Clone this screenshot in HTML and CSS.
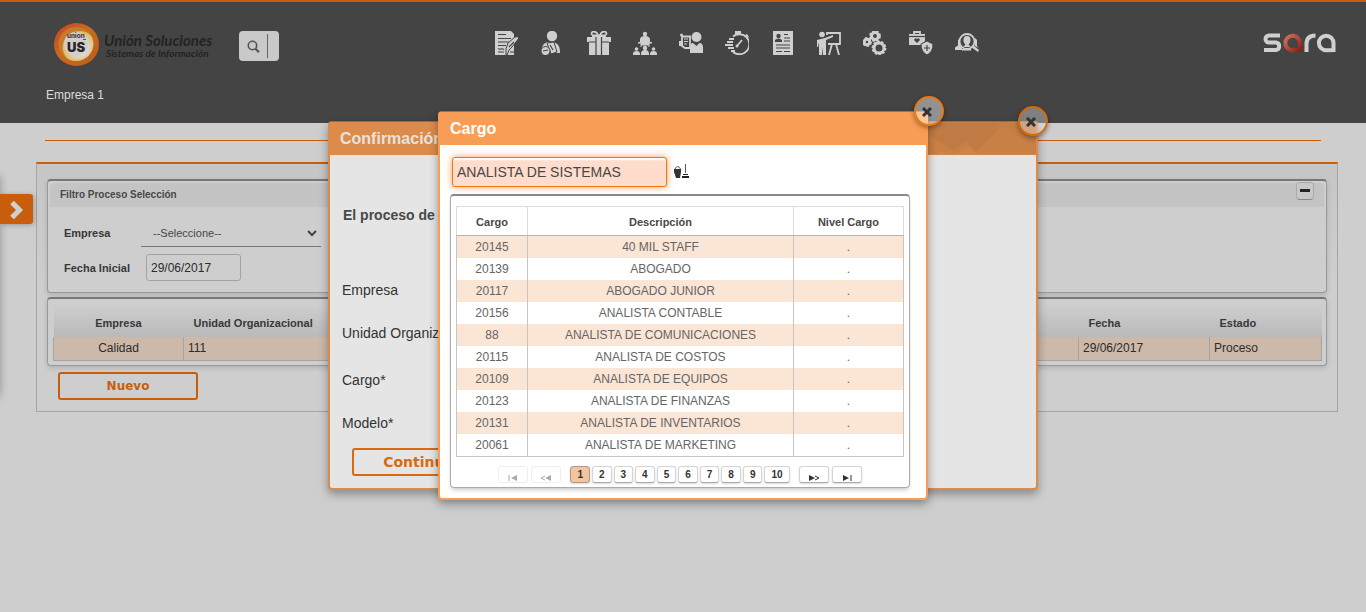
FILE: index.html
```html
<!DOCTYPE html>
<html lang="es">
<head>
<meta charset="utf-8">
<meta name="viewport" content="width=device-width, initial-scale=1">
<title>Proceso Selección</title>
<link rel="stylesheet" href="styles.css">
</head>
<body>
<header class="top">
  <div class="top-row">
    <svg class="logo" width="162" height="44" viewBox="0 0 162 44" role="img" aria-label="Unión Soluciones">
      <defs>
        <radialGradient id="disc" cx=".6" cy=".6"><stop offset=".5" stop-color="#ded8cc"/><stop offset=".75" stop-color="#d9c98d"/><stop offset=".92" stop-color="#dfbd61"/><stop offset="1" stop-color="#c8792e"/></radialGradient>
        <linearGradient id="rim" x1="0" y1="0" x2="1" y2="1"><stop offset="0" stop-color="#c4441b"/><stop offset=".45" stop-color="#c76b20"/><stop offset="1" stop-color="#bd5c18"/></linearGradient>
      </defs>
      <ellipse cx="22.500" cy="22.500" rx="22.500" ry="21.500" fill="url(#rim)"/>
      <ellipse cx="22" cy="22" rx="17.500" ry="17" fill="url(#disc)"/>
      <circle cx="22" cy="22" r="12" fill="#d2cfca"/>
      <text class="logo-mini" x="13" y="16">union</text>
      <text class="logo-us" x="13" y="30">US</text>
      <path d="M29 17.500h3" stroke="#b22" stroke-width="1"/>
      <text class="logo-name" x="50" y="24">Unión Soluciones</text>
      <text class="logo-sub" x="52" y="35">Sistemas de Información</text>
    </svg>
    <form class="search">
      <button class="search-go" type="button" aria-label="Buscar"><svg width="14" height="14" viewBox="0 0 14 14" fill="none" stroke="#555"><circle cx="5.500" cy="5.500" r="4.200" stroke-width="1.600"/><path d="M8.500 8.800l3.500 3.500" stroke-width="2.200"/></svg></button>
      <input class="search-text" type="text" aria-label="Texto a buscar">
    </form>
    <nav class="modules" aria-label="Módulos">
      <a href="#" aria-label="Contratos"><svg viewBox="0 0 24 24"><path d="M0 0h16l3 3v21H0z"/><g class="cut"><path d="M3 3.500h8M3 7.500h13M3 11h11M3 14.500h8M3 18c1-1 2 1 3 0s2 1 3 0M3 21h6"/></g><path class="edge" d="M11 18l2-6 7-6q3-1 4 1l-7 9-3 3-2 5h-1z"/><path class="cut" d="M14 16l5-5M15 21h4"/></svg></a>
      <a href="#" aria-label="Pagos"><svg viewBox="0 0 24 24"><circle cx="11" cy="5" r="5.200"/><path d="M1 17c1-5 4-6 9-6 7 0 9 4 9 11h-8z"/><path class="edge" d="M6 12l7-1 3 10-6 2z"/><circle class="edge" cx="4.500" cy="20" r="4.500"/><path class="cut" d="M9 14l3 5M2 20l5-1"/></svg></a>
      <a href="#" aria-label="Beneficios"><svg viewBox="0 0 24 24"><path class="line" d="M11 4C9-1 3 0 5 4M13 4C15-1 21 0 19 4"/><path d="M5 3.500h14V6H5zM0 6h24v5H0zM2 11h20v13H2z"/><path class="cut" d="M9 6v18M14.500 6v18M2 11h7M15 11h7"/></svg></a>
      <a href="#" aria-label="Organización"><svg viewBox="0 0 24 24"><circle cx="12" cy="3" r="2.200"/><path d="M7 9c0-3 2-4 5-4s5 1 5 4v2H7zM5 11h14v1.500h-3v2H8v-2H5z"/><circle cx="3.500" cy="18" r="1.800"/><circle cx="12" cy="17" r="2.200"/><circle cx="20.500" cy="18" r="1.800"/><path d="M0 24v-1q0-3 3.500-3T7 23v1zM8 24v-1q0-4 4-4t4 4v1zM17 24v-1q0-3 3.500-3t3.500 3v1z"/><path class="thin" d="M8 12v4M16 12v4"/></svg></a>
      <a href="#" aria-label="Evaluación"><svg viewBox="0 0 24 24"><circle cx="17.500" cy="6" r="5"/><path d="M11 22v-6q0-4 3-4l3.500 3 3-3q3.500 0 3.500 5v5zM0 10h4v5H0z"/><path class="line" d="M3 5.500h8V17H6l-3-2z"/><path class="thin" d="M5 8h4M5 10.500h4M5 13h3"/><circle cx="2.500" cy="4" r="1.500"/></svg></a>
      <a href="#" aria-label="Tiempos"><svg viewBox="0 0 24 24"><path class="line" d="M8 5.500A10 10 0 1 1 8 21"/><path d="M10 0h6v3h-6zM20 4l2-1 2 3-2 1z"/><path class="line" d="M4 8h5M2 11h6M0 14h8M3 17h6M6 20h4M12 15l5-6"/><circle cx="12" cy="15" r="1.500"/></svg></a>
      <a href="#" aria-label="Hojas de vida"><svg viewBox="0 0 24 24"><path d="M2 0h20v24H2z"/><circle class="hole" cx="7.500" cy="5" r="2.200"/><path class="hole" d="M4 11V9q3.500-3 7 0v2z"/><path class="cut" d="M13 3.500h4M13 7h6M13 10h6M5 14h14M5 17h14M5 20.500h6M13 20.500h6"/></svg></a>
      <a href="#" aria-label="Capacitación"><svg viewBox="0 0 24 24"><circle cx="5" cy="3.500" r="2.800"/><path d="M0 9l8-2 8-3v2L9 9v15H6l-.5-8L5 24H2V11l-1 5H0z"/><path class="line" d="M10 4V2h13v11H11M15 13l-3 11M19 13l3 11"/></svg></a>
      <a href="#" aria-label="Configuración"><svg viewBox="0 0 24 24"><circle class="gear" cx="12" cy="5" r="3.500"/><circle class="teeth" cx="12" cy="5" r="5"/><circle class="gear" cx="4" cy="11" r="2.700"/><circle class="teeth" cx="4" cy="11" r="4"/><circle class="gear" cx="16" cy="17" r="5"/><circle class="teeth" cx="16" cy="17" r="6.500"/></svg></a>
      <a href="#" aria-label="Salud ocupacional"><svg viewBox="0 0 24 24"><path class="line" d="M5 4V1h6v3"/><path d="M0 3h16v7l-4 4H0z"/><path class="cut" d="M0 5.500h16"/><path class="hole" d="M8 12L5 9q1-3 3-1 2-2 3 1z"/><path class="edge" d="M18 10l6 3q0 8-6 11-6-3-6-11z"/><path class="cut" d="M18 14v6M15 17h6"/></svg></a>
      <a href="#" aria-label="Selección"><svg viewBox="0 0 24 24"><circle class="line" cx="12" cy="10.500" r="7.500"/><path d="M12 5c5 0 4 7 1.500 8.500L16 16H8l2.500-2.500C8 12 7 5 12 5zM0 19v-2.500l3-2V9l2-2v8l2 2v2zM7 18h9v1.500H7zM16 16l2-2 6 5-1 2zM20 15V7l2 2v6l2 2z"/></svg></a>
    </nav>
    <svg class="sara" width="73" height="20" viewBox="0 0 73 20" role="img" aria-label="sara">
      <defs><linearGradient id="red" x1="0" y1="0" x2="1" y2="1"><stop offset="0" stop-color="#cf735c"/><stop offset=".55" stop-color="#b54536"/><stop offset="1" stop-color="#8e1c1a"/></linearGradient></defs>
      <g fill="none" stroke="#cfcfcf" stroke-width="4"><path d="M17 2.500H6a3.500 3.500 0 0 0 0 7h7a3.800 3.800 0 0 1 0 7.500H1"/><path d="M43.500 19v-8q0-8.500 9-8.500"/><path d="M70.500 17V10a7.300 7.300 0 1 0-7.300 7.300z"/></g>
      <path d="M37 17V10a7.300 7.300 0 1 0-7.300 7.300z" fill="none" stroke="url(#red)" stroke-width="4"/>
    </svg>
  </div>
  <p class="company">Empresa 1</p>
</header>

<div class="side-edge"></div>
<button class="side-tab" type="button" aria-label="Abrir menú"><svg width="15" height="18" viewBox="0 0 15 18"><path d="M3 1.500L10.500 9 3 16.500" fill="none" stroke="#d0d0d0" stroke-width="5"/></svg></button>

<main class="page">
  <hr class="rule">
  <section class="panel">
    <section class="box">
      <header class="box-head">
        <h2>Filtro Proceso Selección</h2>
        <button class="fold" type="button" aria-label="Contraer"></button>
      </header>
      <form class="filter">
        <label for="empresa">Empresa</label>
        <span class="pick"><select id="empresa"><option>--Seleccione--</option></select><svg width="10" height="7" viewBox="0 0 10 7"><path d="M1 1l4 4 4-4" fill="none" stroke="#444" stroke-width="2"/></svg></span>
        <label for="fecha">Fecha Inicial</label>
        <input id="fecha" class="date" type="text" value="29/06/2017">
      </form>
    </section>
    <section class="box results">
      <table class="list">
        <colgroup><col class="c-emp"><col><col class="c-date"><col class="c-state"></colgroup>
        <thead><tr><th class="mid">Empresa</th><th>Unidad Organizacional</th><th>Fecha</th><th>Estado</th></tr></thead>
        <tbody><tr><td class="mid">Calidad</td><td>111</td><td>29/06/2017</td><td>Proceso</td></tr></tbody>
      </table>
    </section>
    <button class="btn" type="button">Nuevo</button>
  </section>
</main>

<section class="modal confirm" role="dialog" aria-labelledby="t1">
  <header class="modal-head"><h2 id="t1">Confirmación</h2>
    <svg class="peaks" width="110" height="32" viewBox="0 0 110 32" aria-hidden="true"><path d="M0 0h110v32H0z" fill="#c98045"/><path d="M0 0h80L50 29 40 19l-13 9L0 10z" fill="#c07a43"/><path d="M60 12l14-8 36 20V0H75z" fill="#c67e44"/><path d="M10 32l6-3 8 3zM29 32l12-8 12 8z" fill="#d08547"/></svg>
  </header>
  <button class="close" type="button" aria-label="Cerrar"><svg width="10" height="10" viewBox="0 0 10 10"><path d="M1 1l8 8M9 1l-8 8" stroke="#333" stroke-width="3"/></svg></button>
  <div class="confirm-body">
    <p class="message">El proceso de</p>
    <p>Empresa</p>
    <p class="group-end">Unidad Organizacional</p>
    <p>Cargo*</p>
    <p>Modelo*</p>
    <button class="btn bright" type="button">Continuar</button>
  </div>
</section>

<section class="modal lookup" role="dialog" aria-labelledby="t2">
  <header class="modal-head"><h2 id="t2">Cargo</h2></header>
  <button class="close" type="button" aria-label="Cerrar"><svg width="10" height="10" viewBox="0 0 10 10"><path d="M1 1l8 8M9 1l-8 8" stroke="#333" stroke-width="3"/></svg></button>
  <div class="find">
    <input type="text" aria-label="Cargo" value="ANALISTA DE SISTEMAS">
    <button class="clean" type="button" aria-label="Limpiar"><svg width="15" height="16" viewBox="0 0 15 16"><path d="M0 6h7v3L6 15H2L0 9z" fill="#333"/><path d="M1 6Q3.500 1 6.500 6M11.500 1v9" fill="none" stroke="#555"/><path d="M9 11h5v1H9zM8 13h7v2H8z" fill="#222"/></svg></button>
  </div>
  <div class="grid-box">
    <table class="grid">
      <colgroup><col class="c-code"><col><col class="c-level"></colgroup>
      <thead><tr><th>Cargo</th><th>Descripción</th><th>Nivel Cargo</th></tr></thead>
      <tbody>
        <tr><td>20145</td><td>40 MIL STAFF</td><td>.</td></tr>
        <tr><td>20139</td><td>ABOGADO</td><td>.</td></tr>
        <tr><td>20117</td><td>ABOGADO JUNIOR</td><td>.</td></tr>
        <tr><td>20156</td><td>ANALISTA CONTABLE</td><td>.</td></tr>
        <tr><td>88</td><td>ANALISTA DE COMUNICACIONES</td><td>.</td></tr>
        <tr><td>20115</td><td>ANALISTA DE COSTOS</td><td>.</td></tr>
        <tr><td>20109</td><td>ANALISTA DE EQUIPOS</td><td>.</td></tr>
        <tr><td>20123</td><td>ANALISTA DE FINANZAS</td><td>.</td></tr>
        <tr><td>20131</td><td>ANALISTA DE INVENTARIOS</td><td>.</td></tr>
        <tr><td>20061</td><td>ANALISTA DE MARKETING</td><td>.</td></tr>
      </tbody>
    </table>
    <nav class="pager" aria-label="Páginas">
      <button class="step" type="button" disabled aria-label="Primera"><svg width="12" height="8" viewBox="0 0 12 8"><path d="M2 1v6" stroke="currentColor" fill="none"/><path d="M10 1v6L4 4z" fill="currentColor"/></svg></button>
      <button class="step" type="button" disabled aria-label="Anterior"><svg width="12" height="8" viewBox="0 0 12 8"><path d="M5 2L1 4l4 2" stroke="currentColor" fill="none"/><path d="M11 1v6L5 4z" fill="currentColor"/></svg></button>
      <span class="pages">
        <button class="on" type="button" aria-current="page">1</button><button type="button">2</button><button type="button">3</button><button type="button">4</button><button type="button">5</button><button type="button">6</button><button type="button">7</button><button type="button">8</button><button type="button">9</button><button type="button">10</button>
      </span>
      <button class="step" type="button" aria-label="Siguiente"><svg width="12" height="8" viewBox="0 0 12 8"><path d="M7 2l4 2-4 2" stroke="currentColor" fill="none"/><path d="M1 1v6l6-3z" fill="currentColor"/></svg></button>
      <button class="step" type="button" aria-label="Última"><svg width="12" height="8" viewBox="0 0 12 8"><path d="M10 1v6" stroke="currentColor" fill="none"/><path d="M2 1v6l6-3z" fill="currentColor"/></svg></button>
    </nav>
  </div>
</section>
</body>
</html>
```

FILE: styles.css
```css
* { box-sizing: border-box; }
body { margin: 0; background: #cecece; color: #2b2b2b; font: 12px "Liberation Sans", Arial, sans-serif; }
h2, p { margin: 0; }
button, input, select { font: inherit; color: inherit; margin: 0; }
button { padding: 0; }
table { width: 100%; border-collapse: collapse; table-layout: fixed; }

.top { border-top: 2px solid #c85e0c; background: #444; min-height: 123px; }
.top-row { display: flex; align-items: center; padding: 20px 30px 0 54px; }
.logo-name, .logo-sub { font-family: Lato, sans-serif; font-style: italic; font-weight: 700; fill: #242222; }
.logo-name { font-size: 15px; }
.logo-sub { font-size: 10px; }
.logo-mini { font: 700 7px Roboto, sans-serif; fill: #3a302e; }
.logo-us { font: 900 13px Inter, sans-serif; fill: #2b2524; }
.search { display: flex; align-items: center; width: 40px; height: 30px; margin: 4px 0 0 23px; border-radius: 4px; background: #c9c9c9; }
.search-go { flex: none; width: 29px; height: 24px; padding: 4px 0 0 2px; border: 0; border-right: 1px solid #666; background: none; }
.search-text { width: 10px; height: 24px; padding: 0; border: 0; background: none; }
.modules { display: flex; gap: 22px; margin: 0 0 2px 216px; }
.modules a { width: 24px; height: 24px; }
.modules svg { display: block; width: 24px; height: 24px; fill: #cfcfcf; }
.modules .cut { fill: none; stroke: #444; stroke-width: 1.2; }
.modules .hole { fill: #444; }
.modules .edge { stroke: #444; stroke-width: 1; }
.modules .line { fill: none; stroke: #cfcfcf; stroke-width: 1.8; }
.modules .thin { fill: none; stroke: #cfcfcf; stroke-width: 1; }
.modules .gear { fill: none; stroke: #cfcfcf; stroke-width: 3; }
.modules .teeth { fill: none; stroke: #cfcfcf; stroke-width: 1.8; stroke-dasharray: 2.5 1.5; }
.sara { margin: 0 0 3px auto; }
.company { padding: 22px 46px 0; color: #dedede; line-height: 14px; }

.side-edge { position: fixed; left: -10px; top: 176px; width: 10px; height: 220px; box-shadow: 0 0 8px rgba(0, 0, 0, .3); }
.side-tab { position: fixed; left: 0; top: 194px; width: 33px; height: 30px; border: 0; border-radius: 0 3px 3px 0; background: #c85e0c; box-shadow: 1px 1px 5px rgba(0, 0, 0, .25); }
.side-tab svg { display: block; margin: 1px 0 0 9px; }

.page { padding: 17px 28px 0 36px; }
.rule { height: 1px; margin: 0 17px 21px 9px; border: 0; background: #c85e0c; }
.panel { padding: 15px 10px 11px; border: 1px solid #a5a5a5; border-top: 2px solid #c85e0c; background: linear-gradient(#c6c6c6, #cecece 120px); }
.box { margin-bottom: 4px; padding: 2px; border: 1px solid #999; border-top: 2px solid #777; border-radius: 4px; background: #cecece; box-shadow: 0 2px 5px rgba(0, 0, 0, .15); }
.box-head { display: flex; align-items: center; justify-content: space-between; height: 24px; padding: 0 10px 1px 10px; border-radius: 5px 5px 0 0; background: #c4c4c4; }
.box-head h2 { font-size: 10px; font-weight: 700; color: #484848; }
.fold { width: 18px; height: 18px; margin-bottom: 8px; border: 1px solid #aaa; border-bottom-color: #888; border-radius: 4px; background: #c8c8c8; }
.fold::before { content: ""; display: block; width: 10px; height: 3px; margin: 0 auto; background: #222; }
.filter { display: grid; grid-template-columns: 77px 180px; align-items: center; row-gap: 7px; padding: 12px 14px 9px; }
.filter label { font-size: 11px; font-weight: 700; color: #383838; }
.pick { position: relative; height: 28px; }
.pick select { width: 100%; height: 28px; padding: 0 12px; appearance: none; border: 0; border-bottom: 1px solid #777; background: none; color: #484848; font-size: 11px; }
.pick svg { position: absolute; right: 4px; top: 11px; pointer-events: none; }
.date { width: 95px; height: 27px; margin-left: 5px; padding: 0 4px; border: 1px solid #a2a2a2; border-radius: 3px; background: #cecece; }

.results { margin-bottom: 6px; padding: 6px 4px 4px 5px; }
.list th { height: 32px; padding: 3px 10px 0; background: linear-gradient(#cecece, #b9b9b9); font-size: 11px; color: #383838; text-align: left; }
.list td { height: 23px; padding: 0 4px; border: 1px solid #a5a5a5; border-top: 0; background: #cdb9aa; }
.list .mid { text-align: center; }
.c-emp { width: 130px; }
.c-date { width: 131px; }
.c-state { width: 112px; }
.btn { display: block; width: 140px; height: 28px; margin-left: 11px; border: 2px solid #c85e0c; border-radius: 3px; background: transparent; color: #c85e0c; font: 700 12px "DejaVu Sans", Verdana, sans-serif; }
.btn.bright { margin: -9px 0 0 10px; border-color: #dc690e; color: #dc690e; font-size: 14px; }

.modal { position: absolute; left: 0; right: 0; margin: 0 auto; border: 2px solid #f79d56; border-top: 1px solid #c26a25; border-radius: 4px; background: #fff; box-shadow: 0 4px 10px rgba(0, 0, 0, .35); }
.modal-head { position: relative; height: 33px; padding: 0 10px; background: #f79d56; color: #fff; }
.modal-head h2 { font-size: 16px; line-height: 33px; }
.confirm { top: 121px; width: 710px; height: 369px; border-color: #dd8b4a; border-top-color: #b46428; background: #e5e5e5; }
.confirm .modal-head { background: #dd8b4a; color: #e6e2de; }
.peaks { position: absolute; right: 0; top: 0; height: 33px; }
.close { position: absolute; top: -16px; right: -12px; display: grid; place-items: center; width: 30px; height: 30px; padding: 1px 4px 0 0; border: 2px solid #ee760f; border-radius: 50%; background: rgba(255, 255, 255, .42); box-shadow: 0 2px 5px rgba(0, 0, 0, .4); }
.confirm .close { border-color: #d4680d; background: rgba(225, 225, 225, .38); }
.confirm-body { display: flex; flex-direction: column; padding: 51px 12px 0; font-size: 14px; line-height: 18px; }
.confirm-body p { margin-bottom: 25px; color: #333; }
.confirm-body .group-end { margin-bottom: 29px; }
.confirm-body .message { margin-bottom: 57px; padding-left: 1px; font-weight: 700; color: #484848; }

.lookup { top: 111px; width: 490px; padding-bottom: 10px; }
.lookup .close { right: -18px; }
.find { display: flex; align-items: center; gap: 6px; padding: 12px; }
.find input { width: 215px; height: 30px; padding: 0 4px; border: 1px solid #ee760f; border-radius: 3px; outline: 0; background: #ffdccb; color: #484848; font-size: 14px; box-shadow: 0 0 7px #f79d56, inset 0 2px 2px #fff; }
.clean { width: 17px; height: 18px; border: 0; background: none; }
.grid-box { margin: -5px 16px 0 10px; padding: 10px 5px 4px; border: 1px solid #aaa; border-top: 2px solid #888; border-radius: 4px; box-shadow: 0 3px 5px -2px rgba(0, 0, 0, .3); }
.grid { text-align: center; border: 1px solid #c5c5c5; }
.grid th { height: 29px; padding: 2px 0 0; border: 1px solid #dcdcdc; border-bottom: 1px solid #b5b5b5; font-size: 11px; color: #484848; }
.grid td { height: 22px; padding: 0; border-left: 1px solid #c5c5c5; border-right: 1px solid #c5c5c5; color: #666; }
.grid tbody tr:nth-child(odd) { background: #fbe5d5; }
.grid tbody tr:last-child td { height: 23px; }
.c-code { width: 71px; }
.c-level { width: 110px; }
.pager { display: flex; justify-content: center; gap: 3px; padding-top: 9px; }
.pages { display: flex; gap: 2px; margin: 0 6px; }
.pager button { height: 17px; padding: 0 6px; border: 1px solid #d5d5d5; border-bottom-color: #aaa; border-radius: 3px; background: #fff; color: #333; font-size: 10px; font-weight: 700; line-height: 15px; box-shadow: 0 1px 2px rgba(0, 0, 0, .15); }
.pages button.on { border-color: #a89a90; background: #f5c49d; }
.pager .step { display: grid; place-items: end center; width: 30px; padding: 0; }
.pager .step:disabled { border-color: #eee; color: #aaa; box-shadow: none; }
```
